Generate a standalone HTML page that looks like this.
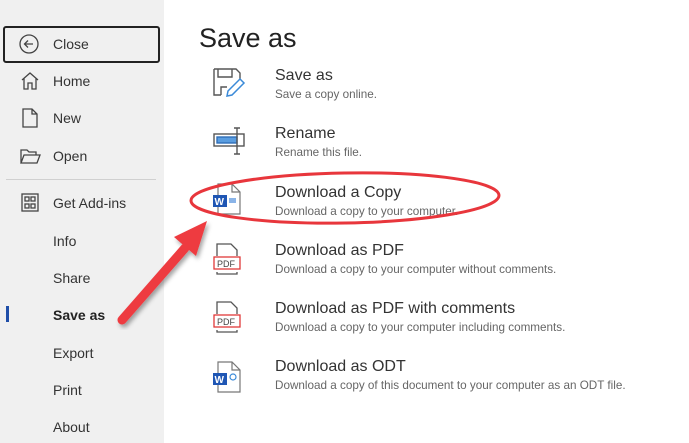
<!DOCTYPE html>
<html><head><style>
body{margin:0;width:689px;height:443px;overflow:hidden;background:#fff;font-family:"Liberation Sans",sans-serif;position:relative}
.side{position:absolute;left:0;top:0;width:164px;height:443px;background:#f0f0f0}
.mi{position:absolute;left:53px;font-size:14px;color:#333;line-height:16px}
.t{position:absolute;left:275px;font-size:16px;color:#333}
.s{position:absolute;left:275px;font-size:11.7px;color:#666}
svg{position:absolute}
</style></head><body>
<div class="side">
<div style="position:absolute;left:3px;top:26px;width:153px;height:33px;border:2px solid #222;border-radius:3px"></div>
<div class="mi" style="top:36px">Close</div>
<div class="mi" style="top:73px">Home</div>
<div class="mi" style="top:110px">New</div>
<div class="mi" style="top:148px">Open</div>
<div style="position:absolute;left:6px;top:179px;width:150px;height:1px;background:#d0d0d0"></div>
<div class="mi" style="top:195px">Get Add-ins</div>
<div class="mi" style="top:233px">Info</div>
<div class="mi" style="top:270px">Share</div>
<div style="position:absolute;left:6px;top:306px;width:3px;height:16px;background:#1f4ea8"></div>
<div class="mi" style="top:307px;font-weight:bold;color:#222">Save as</div>
<div class="mi" style="top:345px">Export</div>
<div class="mi" style="top:382px">Print</div>
<div class="mi" style="top:419px">About</div>
<svg style="left:18px;top:33px" width="22" height="22" viewBox="0 0 22 22" fill="none" stroke="#444" stroke-width="1.3"><circle cx="11" cy="11" r="9"/><path d="M15 11H7M10 7.5L6.5 11 10 14.5"/></svg>
<svg style="left:20px;top:71px" width="20" height="20" viewBox="0 0 20 20" fill="none" stroke="#444" stroke-width="1.3"><path d="M2 9L10 2l8 7M4 7.5V18h4v-6h4v6h4V7.5"/></svg>
<svg style="left:22px;top:108px" width="16" height="20" viewBox="0 0 16 20" fill="none" stroke="#444" stroke-width="1.3"><path d="M1 1h9l5 5v13H1zM10 1v5h5"/></svg>
<svg style="left:20px;top:148px" width="21" height="17" viewBox="0 0 21 17" fill="none" stroke="#444" stroke-width="1.3"><path d="M1 15V2h6l2 2h7v3M1 15l3-8h16l-3 8z"/></svg>
<svg style="left:21px;top:193px" width="18" height="19" viewBox="0 0 18 19" fill="none" stroke="#444" stroke-width="1.3"><rect x="1" y="1" width="16" height="17"/><rect x="4" y="4" width="4" height="4"/><rect x="10" y="4" width="4" height="4"/><rect x="4" y="11" width="4" height="4"/><rect x="10" y="11" width="4" height="4"/></svg>
</div>
<div style="position:absolute;left:199px;top:23px;font-size:27px;color:#222">Save as</div>

<svg style="left:212px;top:67px" width="34" height="34" viewBox="0 0 34 34" fill="none" stroke="#555" stroke-width="1.4"><path d="M2 2h22l4 4v6M2 2v26h7M6 2v8h14V2M9 28v-8h6"/><path d="M28 12l4 4-12 12-5 1 1-5z" stroke="#3b8ad8" stroke-width="1.5"/></svg>
<svg style="left:212px;top:126px" width="36" height="30" viewBox="0 0 36 30" fill="none" stroke="#555" stroke-width="1.4"><rect x="2" y="8" width="30" height="12"/><rect x="5" y="11" width="20" height="6" fill="#5a9de0" stroke="#2f6fb8"/><path d="M25 2v26M22 2h6M22 28h6"/></svg>
<svg style="left:212px;top:182px" width="30" height="34" viewBox="0 0 30 34" fill="none" stroke="#777" stroke-width="1.2"><path d="M6 2h14l8 8v22H6zM20 2v8h8"/><rect x="1" y="13" width="14" height="12" fill="#1f56b4" stroke="none"/><text x="2.5" y="23" font-size="10" font-weight="bold" fill="#fff" stroke="none" font-family="Liberation Sans">W</text><rect x="17" y="16" width="7" height="5" fill="#8ab4e8" stroke="none"/></svg>
<svg style="left:212px;top:242px" width="30" height="34" viewBox="0 0 30 34" fill="none" stroke="#555" stroke-width="1.3"><path d="M5 14V2h14l6 6v6M5 30v2h20v-2"/><rect x="2" y="15" width="26" height="12" stroke="#e03a3a"/><text x="5" y="25" font-size="9" fill="#444" stroke="none" font-family="Liberation Sans">PDF</text></svg>
<svg style="left:212px;top:300px" width="30" height="34" viewBox="0 0 30 34" fill="none" stroke="#555" stroke-width="1.3"><path d="M5 14V2h14l6 6v6M5 30v2h20v-2"/><rect x="2" y="15" width="26" height="12" stroke="#e03a3a"/><text x="5" y="25" font-size="9" fill="#444" stroke="none" font-family="Liberation Sans">PDF</text></svg>
<svg style="left:212px;top:360px" width="30" height="34" viewBox="0 0 30 34" fill="none" stroke="#777" stroke-width="1.2"><path d="M6 2h14l8 8v22H6zM20 2v8h8"/><rect x="1" y="13" width="14" height="12" fill="#1f56b4" stroke="none"/><text x="2.5" y="23" font-size="10" font-weight="bold" fill="#fff" stroke="none" font-family="Liberation Sans">W</text><circle cx="21" cy="17" r="3" stroke="#3b8ad8"/></svg>

<div class="t" style="top:67px">Save as</div><div class="s" style="top:88px">Save a copy online.</div>
<div class="t" style="top:125px">Rename</div><div class="s" style="top:146px">Rename this file.</div>
<div class="t" style="top:184px">Download a Copy</div><div class="s" style="top:205px">Download a copy to your computer.</div>
<div class="t" style="top:242px">Download as PDF</div><div class="s" style="top:263px">Download a copy to your computer without comments.</div>
<div class="t" style="top:300px">Download as PDF with comments</div><div class="s" style="top:321px">Download a copy to your computer including comments.</div>
<div class="t" style="top:358px">Download as ODT</div><div class="s" style="top:379px">Download a copy of this document to your computer as an ODT file.</div>

<svg style="left:0;top:0" width="689" height="443">
<defs><filter id="sh"><feDropShadow dx="2" dy="3" stdDeviation="2" flood-color="#000" flood-opacity="0.35"/></filter></defs>
<ellipse cx="345" cy="198" rx="154" ry="25" fill="none" stroke="#e8363c" stroke-width="3" transform="rotate(-1 345 198)"/>
<g filter="url(#sh)">
<line x1="122" y1="320" x2="185" y2="248" stroke="#ee3a40" stroke-width="9" stroke-linecap="round"/>
<path d="M207 221L174 237 196 256z" fill="#ee3a40"/>
</g>
</svg>
</body></html>
